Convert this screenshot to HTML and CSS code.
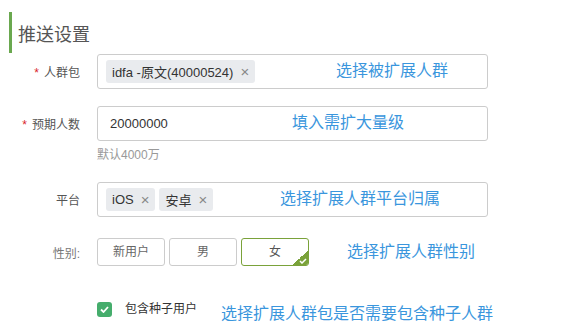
FILE: index.html
```html
<html>
    <head>
        <meta charset="utf-8" />
        <title>推送设置</title>
        <meta name="viewport" content="width=device-width, initial-scale=1">
        <link rel="stylesheet" href="styles.css">
    </head>
    <body>
        <h2 class="section-title">推送设置</h2>
        <div class="form">
            <div class="row">
                <label class="label"><span class="req">*</span>人群包</label>
                <div class="box">
                    <span class="tag">idfa -原文(40000524)<i class="close">×</i></span>
                    <span class="note note-pack">选择被扩展人群</span>
                </div>
            </div>
            <div class="row row-count">
                <label class="label"><span class="req">*</span>预期人数</label>
                <div class="box box-input">
                    <span class="value">20000000</span>
                    <span class="note note-count">填入需扩大量级</span>
                </div>
            </div>
            <div class="hint">默认4000万</div>
            <div class="row row-platform">
                <label class="label">平台</label>
                <div class="box">
                    <span class="tag">iOS<i class="close">×</i></span>
                    <span class="tag">安卓<i class="close">×</i></span>
                    <span class="note note-platform">选择扩展人群平台归属</span>
                </div>
            </div>
            <div class="row row-gender">
                <label class="label label-muted">性别:</label>
                <div class="choices">
                    <span class="choice">新用户</span>
                    <span class="choice">男</span>
                    <span class="choice selected">女
                        <svg class="corner-check" width="8" height="6" viewBox="0 0 8 6"><path d="M1 3 L3 5 L7 1" fill="none" stroke="#fff" stroke-width="1.5"/></svg>
                    </span>
                </div>
                <span class="note-inline note-gender">选择扩展人群性别</span>
            </div>
            <div class="row row-seed">
                <span class="label"></span>
                <span class="checkbox">
                    <svg width="9" height="7" viewBox="0 0 9 7"><path d="M1 3.5 L3.5 6 L8 1" fill="none" stroke="#fff" stroke-width="1.8"/></svg>
                </span>
                <span class="check-text">包含种子用户</span>
                <span class="note-inline note-seed">选择扩展人群包是否需要包含种子人群</span>
            </div>
        </div>
    </body>
</html>
```

FILE: styles.css
```css
body {
    margin: 0;
    background: #fff;
    font-family: "Liberation Sans", "Noto Sans CJK SC", sans-serif;
    color: #333;
}

.section-title {
    margin: 12px 0 0 9px;
    height: 41px;
    box-sizing: border-box;
    padding: 11px 0 0 6px;
    border-left: 3px solid #6aa84f;
    font-size: 18px;
    line-height: 24px;
    font-weight: normal;
    color: #555;
}

.form {
    margin-top: 1px;
}

.row {
    display: flex;
    align-items: center;
}

.label {
    width: 80px;
    margin-right: 17px;
    text-align: right;
    font-size: 12px;
    color: #555;
    flex-shrink: 0;
}

.label-muted {
    color: #777;
}

.req {
    color: #d9262c;
    margin-right: 5px;
}

.box {
    position: relative;
    width: 391px;
    height: 35px;
    box-sizing: border-box;
    border: 1px solid #ccc;
    border-radius: 3px;
    display: flex;
    align-items: center;
    padding-left: 8px;
    gap: 4px;
}

.box-input {
    padding-left: 12px;
}

.tag {
    display: inline-flex;
    align-items: center;
    height: 23px;
    padding: 0 6px 0 6px;
    background: #e9ebee;
    border-radius: 3px;
    font-size: 13px;
    color: #333;
}

.close {
    font-style: normal;
    color: #888;
    font-size: 15px;
    margin-left: 7px;
}

.value {
    font-size: 13px;
    color: #333;
}

.note, .note-inline {
    font-size: 16px;
    line-height: 20px;
    color: #3a96dd;
    white-space: nowrap;
}

.note {
    position: absolute;
    top: 6px;
}

.note-pack { left: 238px; }
.note-count { left: 194px; }
.note-platform { left: 182px; }

.row-count {
    margin-top: 17px;
}

.hint {
    margin: 4px 0 0 97px;
    font-size: 12px;
    line-height: 20px;
    color: #999;
}

.row-platform {
    margin-top: 17px;
}

.row-gender {
    margin-top: 21px;
}

.choices {
    display: flex;
    gap: 4px;
}

.choice {
    position: relative;
    width: 68px;
    height: 28px;
    box-sizing: border-box;
    border: 1px solid #ccc;
    border-radius: 3px;
    font-size: 12px;
    line-height: 26px;
    text-align: center;
    color: #666;
    overflow: hidden;
}

.choice.selected {
    border-color: #7aa23a;
    color: #555;
}

.choice.selected::after {
    content: "";
    position: absolute;
    right: 0;
    bottom: 0;
    width: 15px;
    height: 15px;
    background: linear-gradient(to bottom right, transparent 50%, #7aa23a 50%);
}

.corner-check {
    position: absolute;
    right: 1px;
    bottom: 1px;
    z-index: 1;
}

.note-gender {
    margin-left: 38px;
}

.row-seed {
    margin-top: 34px;
    align-items: flex-start;
}

.checkbox {
    width: 15px;
    height: 15px;
    margin-top: 2px;
    border-radius: 3px;
    background: #45ad6c;
    display: flex;
    align-items: center;
    justify-content: center;
}

.check-text {
    margin-left: 13px;
    font-size: 12px;
    line-height: 19px;
    color: #333;
}

.note-seed {
    margin-left: 24px;
    margin-top: 4px;
}
```
